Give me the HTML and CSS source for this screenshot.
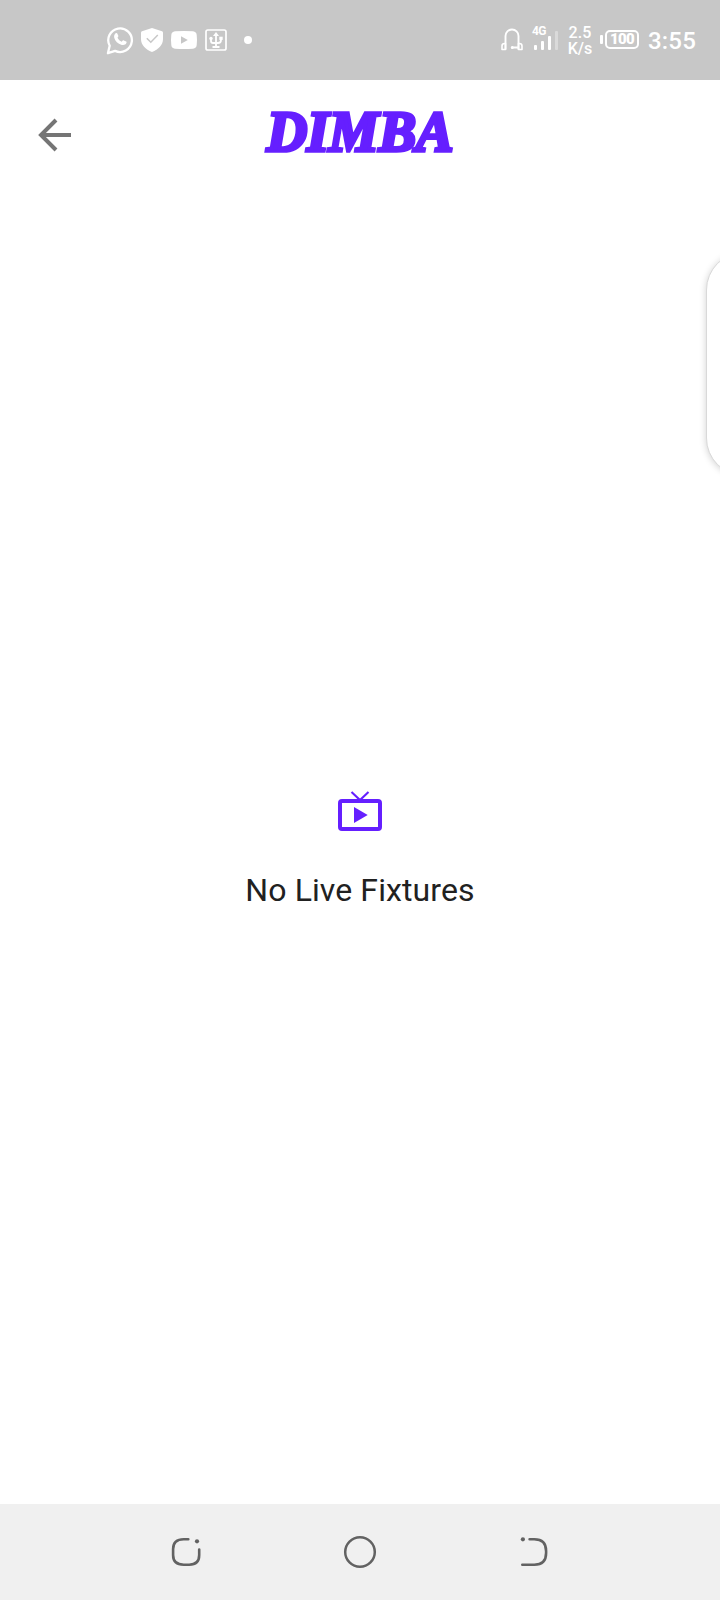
FILE: index.html
```html
<!DOCTYPE html>
<html lang="en">
<head>
<meta charset="utf-8">
<meta name="viewport" content="width=device-width">
<title>Dimba</title>
<link rel="stylesheet" href="styles.css">
</head>
<body>
<div class="screen">
  <div class="status">
    <div class="notifications">
      <svg width="28" height="30" viewBox="-.6 0 28 30"><path d="M1.3 28.2 3.1 20.8A11.8 11.8 0 1 1 8.5 25.9Z" fill="none" stroke="#fff" stroke-width="2.3" stroke-linejoin="round"/><path d="M9 8.200c.6-.5 1.400-.4 1.700.3l1 2.300c.2.5 0 .9-.8 1.900 1 2 2.300 3.100 4.300 4 1-1.200 1.400-1.600 2-1.300l2.400 1.200c.5.3.5.8.2 1.500-.8 1.800-2.700 2.300-4.600 1.800-4.100-1.100-6.600-3.600-7.500-6.800-.5-1.900 0-3.900 1.300-4.900Z" fill="#fff"/></svg>
      <svg width="24" height="30" viewBox="0 0 24 30"><path d="M12 3 22 6.300Q23 6.600 23 7.700V14c0 6-4.500 10.500-11 13C5.500 24.500 1 20 1 14V7.700Q1 6.600 2 6.300Z" fill="#fff"/><path d="m6.800 13.300 4 4 7-7.200" fill="none" stroke="#c7c7c7" stroke-width="1.500"/></svg>
      <svg width="28" height="30" viewBox="0 0 28 30"><path d="M5 6.300Q14 5.600 23 6.300 26.500 6.700 26.700 10 27.300 15 26.700 20 26.500 23.300 23 23.700 14 24.400 5 23.700 1.500 23.300 1.300 20 .7 15 1.300 10 1.500 6.700 5 6.300Z" fill="#fff"/><path d="M11 11.200v7.600l6.800-3.800Z" fill="#c7c7c7"/></svg>
      <svg width="24" height="30" viewBox="0 0 24 30"><rect x="2" y="5" width="20" height="20" rx="1.800" fill="none" stroke="#fff" stroke-width="1.700"/><path d="M12 9v12M7 14v2q0 2 2 2h3M17 13v2q0 3-3 3h-2M8.500 22h7" fill="none" stroke="#fff" stroke-width="1.800"/><path d="m12 7-3 4h6Z" fill="#fff"/><circle cx="7" cy="13.500" r="1.700" fill="#fff"/><path d="M15.300 11.700h3.400v3.200h-3.400Z" fill="#fff"/></svg>
      <svg class="dot" width="8" height="8" viewBox="0 0 8 8"><circle cx="4" cy="4" r="4" fill="#fff"/></svg>
    </div>
    <div class="indicators">
      <svg width="24" height="30" viewBox="0 0 24 30"><path d="M5.500 24.500V11a6.500 6.500 0 0 1 13 0v13.500M11.500 22.500h6" fill="none" stroke="#fff" stroke-width="1.900"/><path d="M5.500 18.500h-1q-2.500 0-2.500 2.500v3.500h3.500ZM18.500 18.500h1q2.500 0 2.500 2.500v3.500h-3.500Z" fill="none" stroke="#fff" stroke-width="1.600" stroke-linejoin="round"/><circle cx="12.300" cy="22.500" r="1.500" fill="#fff"/></svg>
      <div class="signal">
        <span class="network">4G</span>
        <svg width="28" height="20" viewBox="0 0 28 20" fill="#fff"><rect x="2" y="14" width="3" height="5" rx="1"/><rect x="9" y="10" width="3" height="9" rx="1"/><rect x="16" y="5" width="3" height="14" rx="1"/><rect x="23" width="3" height="19" rx="1" opacity=".35"/></svg>
      </div>
      <div class="speed"><span>2.5</span><span>K/s</span></div>
      <div class="battery"><i class="battery-tip"></i><span class="battery-level">100</span></div>
      <span class="time">3:55</span>
    </div>
  </div>

  <header class="appbar">
    <svg class="back" width="34" height="34" viewBox="0 0 34 34"><path d="M33 17H4M18 2 3 17l15 15" fill="none" stroke="#757575" stroke-width="4"/></svg>
    <h1 class="logo">DIMBA</h1>
  </header>

  <main class="empty">
    <svg width="44" height="42" viewBox="0 0 44 42"><path d="m13.500 2 8.500 8 8.500-8" fill="none" stroke="#651fff" stroke-width="2.100"/><rect x="2" y="11" width="40" height="28" rx="2" fill="none" stroke="#651fff" stroke-width="4"/><path d="M16 17v16l13.700-8Z" fill="#651fff"/></svg>
    <p class="message">No Live Fixtures</p>
  </main>

  <nav class="navbar">
    <svg width="32" height="32" viewBox="-.7 0 32 32" fill="none" stroke="#626262" stroke-width="2.600" stroke-linecap="round"><path d="M17.600 3.300H13Q2.400 3.300 2.400 13v6Q2.400 28.700 13 28.700h5.500Q28.500 28.700 28.500 19v-5.500"/><circle cx="26.300" cy="5.300" r="2.100" fill="#626262" stroke="none"/></svg>
    <svg width="34" height="34" viewBox="0 0 34 34"><circle cx="17" cy="17" r="14.800" fill="none" stroke="#626262" stroke-width="2.500"/></svg>
    <svg width="32" height="32" viewBox="-.3 0 32 32" fill="none" stroke="#626262" stroke-width="2.600" stroke-linecap="round"><path d="M11.300 3.300H16Q27.800 3.300 27.800 15v2Q27.800 28.700 16 28.700H4"/><circle cx="4.600" cy="3.300" r="2.100" fill="#626262" stroke="none"/></svg>
  </nav>
  <div class="edge-panel"></div>
</div>
</body>
</html>
```
FILE: styles.css
```css
* { box-sizing: border-box; }
body { margin: 0; font-family: Roboto, sans-serif; background: #fff; }
svg { display: block; flex: none; }
.screen { position: relative; display: flex; flex-direction: column; width: 720px; height: 1600px; overflow: hidden; }
.status { display: flex; justify-content: space-between; align-items: flex-start; height: 80px; padding: 25px 24px 0 106px; background: #c7c7c7; color: #fff; }
.notifications { display: flex; align-items: center; height: 30px; gap: 6px; }
.notifications .dot { margin-left: 10px; }
.indicators { display: flex; align-items: flex-start; height: 30px; }
.signal { display: flex; flex-direction: column; width: 28px; margin-left: 8px; }
.network { height: 6px; font-size: 12px; line-height: 12px; font-weight: 700; letter-spacing: -.5px; }
.speed { display: flex; flex-direction: column; align-items: center; width: 26px; margin-left: 7px; font-size: 16px; line-height: 16px; font-weight: 500; }
.battery { display: flex; align-items: center; gap: 2px; height: 28px; margin-left: 7px; }
.battery-tip { width: 3px; height: 9px; border-radius: 1px; background: #fff; }
.battery-level { width: 34px; height: 19px; border: 2px solid #fff; border-radius: 5px; font-size: 15px; line-height: 15px; font-weight: 900; text-align: center; letter-spacing: -.7px; }
.time { margin-left: 9px; font-size: 24px; line-height: 32px; font-weight: 500; letter-spacing: .2px; }
.appbar { display: grid; grid-template-columns: 1fr auto 1fr; align-items: center; height: 110px; padding: 0 38px; }
.logo { grid-column: 2; margin: -6px 0 0; color: #651fff; font: italic 700 56px/60px "Liberation Serif", serif; -webkit-text-stroke: 3.6px #651fff; }
.empty { flex: 1; display: flex; flex-direction: column; align-items: center; padding-top: 600px; }
.message { margin: 38px 0 0; font-size: 32px; line-height: 40px; color: #212121; letter-spacing: .1px; }
.navbar { display: flex; justify-content: center; align-items: center; gap: 141px; height: 96px; background: #f0f0f0; }
.edge-panel { position: absolute; top: 252px; left: 706px; width: 80px; height: 224px; border-radius: 38px; background: #fff; border: 1px solid #d9d9d9; box-shadow: 0 1px 7px rgba(0,0,0,.18); }
```
